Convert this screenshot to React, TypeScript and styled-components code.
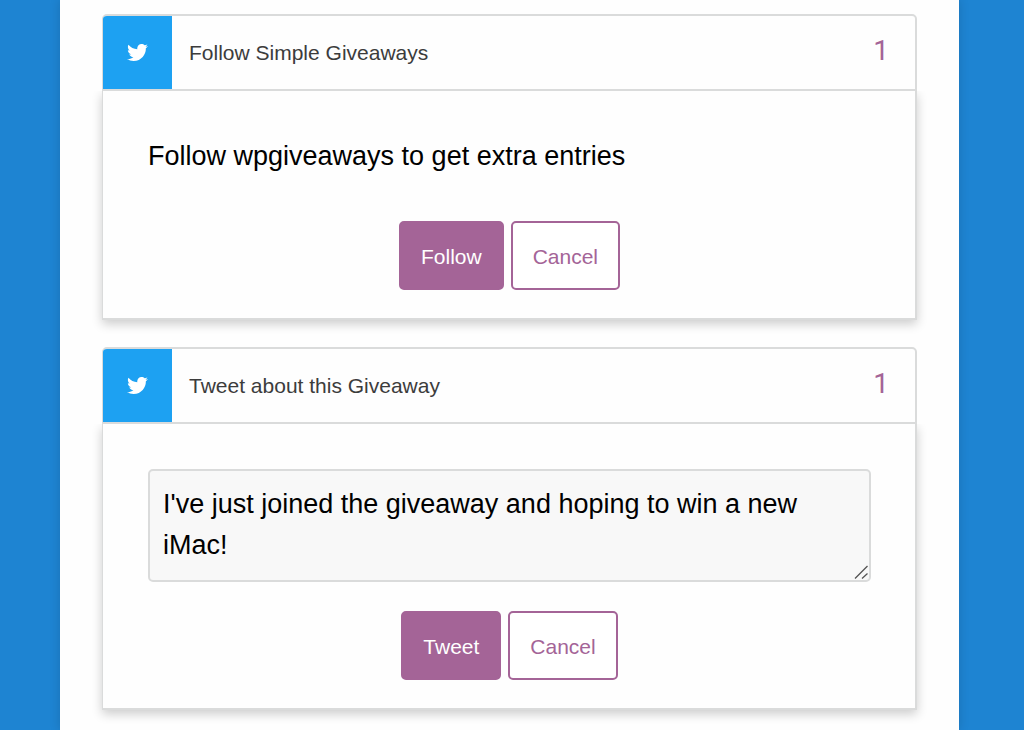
import React, { useId } from "react";
import styled, { createGlobalStyle } from "styled-components";
import { FaTwitter } from "react-icons/fa";

const accent = "#a46497";
const line = "#dadbdb";

const GlobalStyle = createGlobalStyle`
  *, *::before, *::after { box-sizing: border-box; }
  body {
    margin: 0;
    background: #1e84d2;
    font-family: "Liberation Sans", Arial, Helvetica, sans-serif;
    color: #000;
  }
`;

const Page = styled.div`
  padding: 0 65px 0 60px;
`;

const Sheet = styled.main`
  display: flex;
  flex-direction: column;
  gap: 27px;
  min-height: 100vh;
  padding: 14px 42px 20px;
  background: #fefefe;
  box-shadow: 0 0 10px rgba(0, 0, 0, 0.15);
`;

const Card = styled.section`
  display: flex;
  flex-direction: column;
`;

const CardHeader = styled.header`
  display: flex;
  align-items: stretch;
  height: 77px;
  border: 2px solid ${line};
  border-left-width: 1px;
  border-radius: 5px 5px 0 0;
  overflow: hidden;
`;

const IconTile = styled.div`
  display: flex;
  align-items: center;
  justify-content: center;
  width: 69px;
  background: #1da1f2;
  color: #fff;
  font-size: 21px;
`;

const Title = styled.h2`
  flex: 1;
  align-self: center;
  margin: 0;
  padding-left: 17px;
  font-size: 21px;
  line-height: 26px;
  font-weight: 400;
  color: #3c3c3c;
`;

const Points = styled.span`
  align-self: center;
  padding: 0 26px 4px 0;
  font-family: Roboto, "Liberation Sans", sans-serif;
  font-size: 28px;
  line-height: 30px;
  color: ${accent};
`;

const CardBody = styled.div`
  display: flex;
  flex-direction: column;
  padding: 45px 44px 28px 45px;
  border: 2px solid ${line};
  border-top: 0;
  border-left-width: 1px;
  box-shadow: 0 4px 10px rgba(0, 0, 0, 0.2);
  clip-path: inset(0 -20px -20px -20px);
`;

const Message = styled.p`
  margin: 0 0 45px;
  font-size: 27px;
  line-height: 40px;
`;

const TextField = styled.div`
  position: relative;
  display: flex;
  margin: 0 0 29px;
`;

const TextArea = styled.textarea`
  flex: 1;
  height: 113px;
  padding: 13px;
  border: 2px solid ${line};
  border-radius: 5px;
  outline: none;
  background: #f8f8f8;
  color: #000;
  font: inherit;
  font-size: 27px;
  line-height: 41px;
  resize: vertical;
  overflow: hidden;

  &::-webkit-resizer {
    background: transparent;
  }
`;

const Grip = styled.svg`
  position: absolute;
  right: 2px;
  bottom: 2px;
  pointer-events: none;
`;

const Actions = styled.div`
  display: flex;
  justify-content: center;
  gap: 7px;
`;

const Button = styled.button<{ $filled?: boolean }>`
  height: 69px;
  padding: 3px 20px 0;
  border: 2px solid ${accent};
  border-radius: 5px;
  background: ${(p) => (p.$filled ? accent : "#fff")};
  color: ${(p) => (p.$filled ? "#fff" : accent)};
  font: inherit;
  font-size: 21px;
  line-height: 26px;
  cursor: pointer;
`;

interface EntryProps {
  title: string;
  points: number;
  action: string;
  children: React.ReactNode;
}

function Entry({ title, points, action, children }: EntryProps) {
  const id = useId();
  return (
    <Card aria-labelledby={id}>
      <CardHeader>
        <IconTile>
          <FaTwitter aria-hidden="true" />
        </IconTile>
        <Title id={id}>{title}</Title>
        <Points>{points}</Points>
      </CardHeader>
      <CardBody>
        {children}
        <Actions>
          <Button type="button" $filled>
            {action}
          </Button>
          <Button type="button">Cancel</Button>
        </Actions>
      </CardBody>
    </Card>
  );
}

export default function App() {
  return (
    <Page>
      <GlobalStyle />
      <Sheet>
        <Entry title="Follow Simple Giveaways" points={1} action="Follow">
          <Message>Follow wpgiveaways to get extra entries</Message>
        </Entry>
        <Entry title="Tweet about this Giveaway" points={1} action="Tweet">
          <TextField>
            <TextArea
              aria-label="Tweet text"
              spellCheck={false}
              defaultValue="I've just joined the giveaway and hoping to win a new iMac!"
            />
            <Grip width="15" height="15" viewBox="0 0 15 15" aria-hidden="true">
              <path d="M1 13.5 13.5 1M8 13.5 13.5 8.5" fill="none" stroke="#555" strokeWidth="1.3" />
            </Grip>
          </TextField>
        </Entry>
      </Sheet>
    </Page>
  );
}
